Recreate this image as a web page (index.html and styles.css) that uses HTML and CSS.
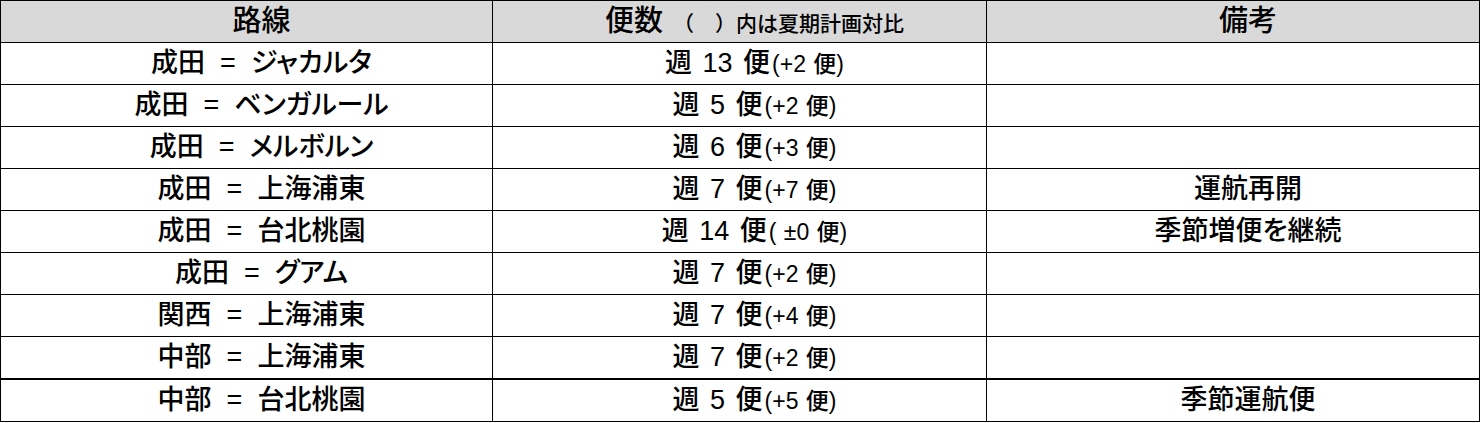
FILE: index.html
```html
<!DOCTYPE html>
<html lang="ja">
<head>
<meta charset="utf-8">
<link rel="stylesheet" href="styles.css">
</head>
<body>
<table class="sched">
  <colgroup>
    <col class="c1"><col class="c2"><col class="c3">
  </colgroup>
  <thead>
    <tr>
      <th>路線</th>
      <th>便数<span class="note">（　）内は夏期計画対比</span></th>
      <th>備考</th>
    </tr>
  </thead>
  <tbody>
    <tr><td>成田  =  ジャカルタ</td><td class="freq">週 13 便<span class="diff">(+2 便)</span></td><td></td></tr>
    <tr><td>成田  =  ベンガルール</td><td class="freq">週 5 便<span class="diff">(+2 便)</span></td><td></td></tr>
    <tr><td>成田  =  メルボルン</td><td class="freq">週 6 便<span class="diff">(+3 便)</span></td><td></td></tr>
    <tr><td>成田  =  上海浦東</td><td class="freq">週 7 便<span class="diff">(+7 便)</span></td><td>運航再開</td></tr>
    <tr><td>成田  =  台北桃園</td><td class="freq">週 14 便<span class="diff">( ±0 便)</span></td><td>季節増便を継続</td></tr>
    <tr><td>成田  =  グアム</td><td class="freq">週 7 便<span class="diff">(+2 便)</span></td><td></td></tr>
    <tr><td>関西  =  上海浦東</td><td class="freq">週 7 便<span class="diff">(+4 便)</span></td><td></td></tr>
    <tr><td>中部  =  上海浦東</td><td class="freq">週 7 便<span class="diff">(+2 便)</span></td><td></td></tr>
    <tr class="last"><td>中部  =  台北桃園</td><td class="freq">週 5 便<span class="diff">(+5 便)</span></td><td>季節運航便</td></tr>
  </tbody>
</table>
</body>
</html>
```

FILE: styles.css
```css
html, body {
  margin: 0;
  padding: 0;
  background: #ffffff;
}

.sched {
  border-collapse: collapse;
  table-layout: fixed;
  width: 1479px;
  font-family: "Liberation Sans", "Noto Sans CJK JP", sans-serif;
  font-feature-settings: "palt";
  color: #000;
}

.c1 { width: 492px; }
.c2 { width: 494px; }
.c3 { width: 493px; }

.sched th,
.sched td {
  border: 1px solid #000;
  height: 41px;
  padding: 0 0 0 30px;
  text-align: center;
  vertical-align: middle;
  white-space: pre;
  line-height: 1;
}

.sched th {
  background: #d9d9d9;
  font-size: 29px;
  font-weight: 500;
}

.sched td {
  font-size: 27px;
  font-weight: 500;
}

.sched td.freq {
  word-spacing: 3px;
}

.note {
  font-size: 21px;
  margin-left: 10px;
  font-feature-settings: normal;
}

.diff {
  font-size: 23px;
  word-spacing: 1px;
  margin-left: 2px;
}

.sched tr.last td {
  border-top: 2px solid #000;
}
```
